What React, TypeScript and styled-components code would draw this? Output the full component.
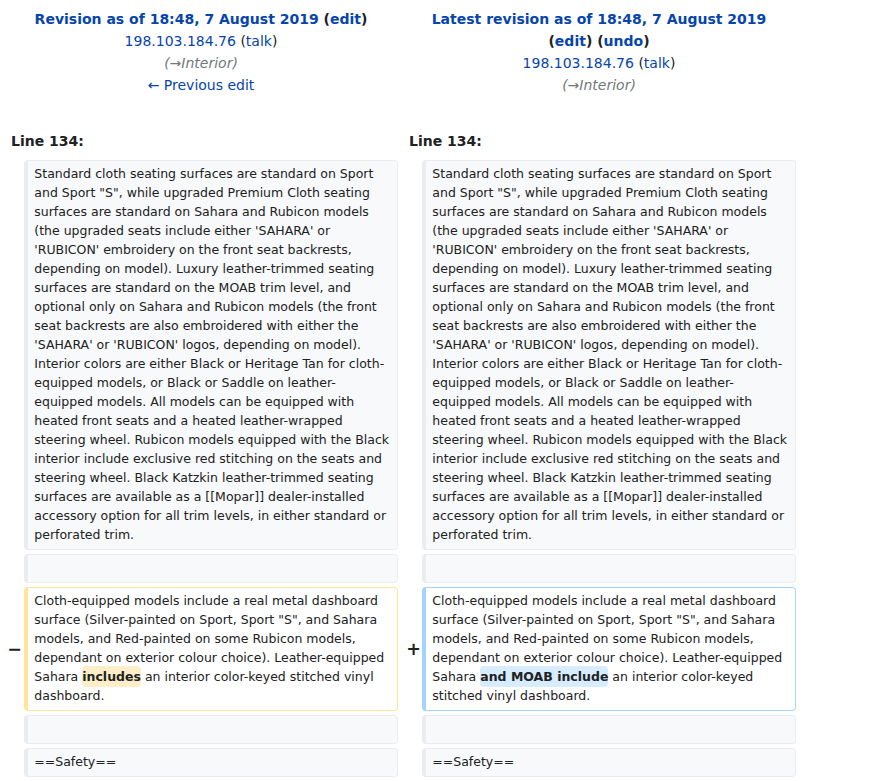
import React from "react";
import styled, { createGlobalStyle } from "styled-components";

const Global = createGlobalStyle`
  html, body { margin: 0; padding: 0; background: #fff; }
  body { font-family: "DejaVu Sans", sans-serif; color: #202122; }
`;

const Diff = styled.div`
  display: grid;
  grid-template-columns: 16px 374px 16px 374px;
  column-gap: 4px;
  row-gap: 4px;
  padding: 4px;
  width: 800px;
  box-sizing: border-box;
`;

const Title = styled.div`
  grid-column: span 2;
  text-align: center;
  font-size: 14px;
  line-height: 22px;
  padding: 4px 8px 0;
`;

const TitleLine = styled.div<{ $bold?: boolean }>`
  font-weight: ${(p) => (p.$bold ? "bold" : "normal")};
`;

const Link = styled.a`
  color: #0645ad;
  text-decoration: none;
`;

const Comment = styled.span`
  font-style: italic;
  color: #72777d;
`;

const LineNo = styled.div`
  grid-column: span 2;
  font-weight: bold;
  font-size: 14px;
  line-height: 22px;
  padding: 30px 0 4px 7px;
`;

const Marker = styled.div<{ $nudge?: number }>`
  display: flex;
  align-items: center;
  justify-content: flex-end;
  font-weight: bold;
  font-size: 17.5px;
  line-height: 1.2;
  margin-right: ${(p) => p.$nudge ?? 0}px;
`;

type Kind = "context" | "deleted" | "added";

const borderFor: Record<Kind, string> = {
  context: "#eaecf0",
  deleted: "#ffe49c",
  added: "#a3d3ff",
};

const Cell = styled.div<{ $kind: Kind }>`
  box-sizing: border-box;
  font-size: 12.5px;
  line-height: 19px;
  padding: 3px 5px 5px 6.3px;
  border-style: solid;
  border-width: 1px 1px 1px 4px;
  border-color: ${(p) => borderFor[p.$kind]};
  border-radius: 4px;
  background: ${(p) => (p.$kind === "context" ? "#f8f9fa" : "#ffffff")};
  color: #202122;
  overflow-wrap: break-word;
`;

const Change = styled.span<{ $kind: "deleted" | "added" }>`
  font-weight: bold;
  border-radius: 4px;
  padding: 3px 0;
  background: ${(p) => (p.$kind === "deleted" ? "#feeec8" : "#d8ecff")};
`;

const para1 =
  "Standard cloth seating surfaces are standard on Sport and Sport \"S\", while upgraded Premium Cloth seating surfaces are standard on Sahara and Rubicon models (the upgraded seats include either 'SAHARA' or 'RUBICON' embroidery on the front seat backrests, depending on model). Luxury leather-trimmed seating surfaces are standard on the MOAB trim level, and optional only on Sahara and Rubicon models (the front seat backrests are also embroidered with either the 'SAHARA' or 'RUBICON' logos, depending on model). Interior colors are either Black or Heritage Tan for cloth-equipped models, or Black or Saddle on leather-equipped models. All models can be equipped with heated front seats and a heated leather-wrapped steering wheel. Rubicon models equipped with the Black interior include exclusive red stitching on the seats and steering wheel. Black Katzkin leather-trimmed seating surfaces are available as a [[Mopar]] dealer-installed accessory option for all trim levels, in either standard or perforated trim.";

const changedPrefix =
  "Cloth-equipped models include a real metal dashboard surface (Silver-painted on Sport, Sport \"S\", and Sahara models, and Red-painted on some Rubicon models, dependant on exterior colour choice). Leather-equipped Sahara ";

function ContextRow({ text }: { text?: string }) {
  return (
    <>
      <Marker />
      <Cell $kind="context">{text ?? <br />}</Cell>
      <Marker />
      <Cell $kind="context">{text ?? <br />}</Cell>
    </>
  );
}

export default function App() {
  return (
    <>
      <Global />
      <Diff>
        <Title>
          <TitleLine $bold>
            <Link href="#">Revision as of 18:48, 7 August 2019</Link> (<Link href="#">edit</Link>)
          </TitleLine>
          <TitleLine>
            <Link href="#">198.103.184.76</Link> (<Link href="#">talk</Link>)
          </TitleLine>
          <TitleLine>
            <Comment>(→Interior)</Comment>
          </TitleLine>
          <TitleLine>
            <Link href="#">← Previous edit</Link>
          </TitleLine>
        </Title>
        <Title>
          <TitleLine $bold>
            <Link href="#">Latest revision as of 18:48, 7 August 2019</Link> (<Link href="#">edit</Link>) (
            <Link href="#">undo</Link>)
          </TitleLine>
          <TitleLine>
            <Link href="#">198.103.184.76</Link> (<Link href="#">talk</Link>)
          </TitleLine>
          <TitleLine>
            <Comment>(→Interior)</Comment>
          </TitleLine>
        </Title>

        <LineNo>Line 134:</LineNo>
        <LineNo>Line 134:</LineNo>

        <ContextRow text={para1} />
        <ContextRow />

        <Marker $nudge={-2}>−</Marker>
        <Cell $kind="deleted">
          {changedPrefix}
          <Change $kind="deleted">includes</Change> an interior color-keyed stitched vinyl dashboard.
        </Cell>
        <Marker $nudge={-3}>+</Marker>
        <Cell $kind="added">
          {changedPrefix}
          <Change $kind="added">and MOAB include</Change> an interior color-keyed stitched vinyl dashboard.
        </Cell>

        <ContextRow />
        <ContextRow text="==Safety==" />
      </Diff>
    </>
  );
}
